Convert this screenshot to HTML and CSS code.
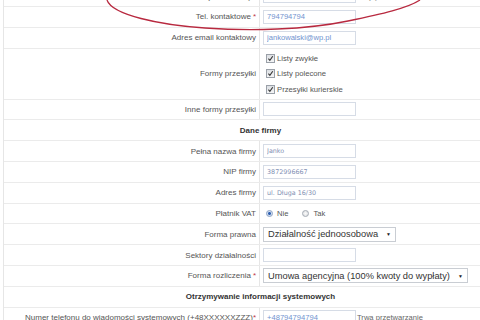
FILE: index.html
```html
<!DOCTYPE html>
<html lang="pl">
<head>
  <meta charset="UTF-8">
  <meta name="viewport" content="width=device-width, initial-scale=1.0">
  <title>Dane kontaktowe</title>
  <link rel="stylesheet" href="styles.css">
</head>
<body>

  <div class="form">

    <div class="row">
      <div class="label">Data urodzenia (rrrr-mm-dd) <span class="req">*</span></div>
      <div class="field"><input type="text" class="text" value="1985-04-12"><span class="hint">(?)</span></div>
    </div>

    <div class="row">
      <div class="label">Tel. kontaktowe <span class="req">*</span></div>
      <div class="field"><input type="text" class="text" value="794794794"></div>
    </div>

    <div class="row">
      <div class="label">Adres email kontaktowy</div>
      <div class="field"><input type="text" class="text" value="jankowalski@wp.pl"></div>
    </div>

    <div class="row tall">
      <div class="label">Formy przesyłki</div>
      <div class="field checks">
        <label class="check"><span class="box"><svg viewBox="0 0 9 9"><path d="M1.8 4.6 L3.7 6.8 L7.4 1.6"/></svg></span>Listy zwykłe</label>
        <label class="check"><span class="box"><svg viewBox="0 0 9 9"><path d="M1.8 4.6 L3.7 6.8 L7.4 1.6"/></svg></span>Listy polecone</label>
        <label class="check"><span class="box"><svg viewBox="0 0 9 9"><path d="M1.8 4.6 L3.7 6.8 L7.4 1.6"/></svg></span>Przesyłki kurierskie</label>
      </div>
    </div>

    <div class="row">
      <div class="label">Inne formy przesyłki</div>
      <div class="field"><input type="text" class="text" value=""></div>
    </div>

    <div class="row head">Dane firmy</div>

    <div class="row">
      <div class="label">Pełna nazwa firmy</div>
      <div class="field"><input type="text" class="text plain" value="Janko"></div>
    </div>

    <div class="row">
      <div class="label">NIP firmy</div>
      <div class="field"><input type="text" class="text plain" value="3872996667"></div>
    </div>

    <div class="row">
      <div class="label">Adres firmy</div>
      <div class="field"><input type="text" class="text plain" value="ul. Długa 16/30"></div>
    </div>

    <div class="row">
      <div class="label">Płatnik VAT</div>
      <div class="field">
        <label class="radio"><span class="dot on"></span>Nie</label>
        <label class="radio"><span class="dot"></span>Tak</label>
      </div>
    </div>

    <div class="row">
      <div class="label">Forma prawna</div>
      <div class="field"><div class="select">Działalność jednoosobowa <span class="arrow">▼</span></div></div>
    </div>

    <div class="row">
      <div class="label">Sektory działalności</div>
      <div class="field"><input type="text" class="text" value=""></div>
    </div>

    <div class="row">
      <div class="label">Forma rozliczenia <span class="req">*</span></div>
      <div class="field"><div class="select">Umowa agencyjna (100% kwoty do wypłaty) <span class="arrow">▼</span></div></div>
    </div>

    <div class="row head">Otrzymywanie informacji systemowych</div>

    <div class="row">
      <div class="label">Numer telefonu do wiadomości systemowych (+48XXXXXXZZZ)<span class="req tight">*</span></div>
      <div class="field"><input type="text" class="text" value="+48794794794"><span class="note">Trwa przetwarzanie</span></div>
    </div>

  </div>

  <!-- zaznaczenie recznie dorysowane na zrzucie -->
  <svg class="mark" viewBox="0 0 480 40">
    <path d="M107 0 C112 15 160 25 205 28 C250 31 305 30 348 21 C382 14 408 8 420 0"/>
  </svg>

</body>
</html>
```

FILE: styles.css
```css
* {
  box-sizing: border-box;
}

html, body {
  margin: 0;
  padding: 0;
  background-color: #fff;
  overflow: hidden;
  height: 320px;
}

body {
  font-family: "Liberation Sans", Arial, sans-serif;
  font-size: 8px;
  color: #555;
}

.form {
  width: 514px;
  margin: -13.8px 0 0 3px;
  border-left: 1px solid #e6e6e6;
}

.row {
  display: flex;
  height: 20.8px;
  border-bottom: 1px solid #ebebeb;
}

.row.tall {
  height: 51px;
}

.row.head {
  align-items: center;
  justify-content: center;
  font-weight: bold;
  color: #333;
}

.label {
  width: 256px;
  flex-shrink: 0;
  display: flex;
  align-items: center;
  justify-content: flex-end;
  padding-right: 3px;
  border-right: 1px solid #e6e6e6;
  white-space: nowrap;
}

.req {
  color: #c0394a;
  margin-left: 2px;
}

.req.tight {
  margin-left: 0;
}

.field {
  flex-grow: 1;
  display: flex;
  align-items: center;
  padding-left: 3px;
}

.text {
  width: 93px;
  height: 14px;
  padding: 0 3px;
  border: 1px solid #d6dce6;
  font-family: "Liberation Sans", Arial, sans-serif;
  font-size: 7.6px;
  color: #7193cf;
  background-color: #fff;
}

.text.plain {
  font-family: "DejaVu Sans", Verdana, sans-serif;
  font-size: 6.4px;
  color: #7f8fb3;
}

.hint {
  margin-left: 12px;
  color: #888;
}

.note {
  margin-left: 1px;
  color: #666;
  font-size: 7.6px;
}

.checks {
  flex-direction: column;
  align-items: flex-start;
  justify-content: center;
  gap: 6.5px;
  padding-left: 6px;
}

.check {
  display: flex;
  align-items: center;
  height: 9px;
  font-size: 7.7px;
  color: #555;
}

.box {
  width: 9px;
  height: 9px;
  margin-right: 2px;
  border: 1px solid #9aa0a8;
  background: linear-gradient(#dcdfe3, #f4f5f6);
}

.box svg {
  display: block;
  width: 7px;
  height: 7px;
}

.box path {
  fill: none;
  stroke: #333;
  stroke-width: 1.4;
}

.radio {
  display: flex;
  align-items: center;
  margin-right: 11px;
  font-size: 7.6px;
  color: #555;
}

.dot {
  width: 7px;
  height: 7px;
  margin: 0 4px 0 3px;
  border: 1px solid #a5abb3;
  border-radius: 50%;
  background: radial-gradient(#fafafa, #d8dade);
}

.dot.on {
  border-color: #8aa2c6;
  background: radial-gradient(#2d5fb0 35%, #c9d6ea 45%, #eef2f8);
}

.select {
  display: flex;
  align-items: center;
  height: 15px;
  padding: 0 4px;
  border: 1px solid #c9cdd3;
  background-color: #fff;
  font-size: 9.3px;
  color: #333;
  white-space: nowrap;
}

.arrow {
  margin-left: 8px;
  font-size: 5px;
  color: #222;
}

.mark {
  position: absolute;
  top: 0;
  left: 0;
  width: 480px;
  height: 40px;
  pointer-events: none;
}

.mark path {
  fill: none;
  stroke: #b8293f;
  stroke-width: 1.3;
}
```
